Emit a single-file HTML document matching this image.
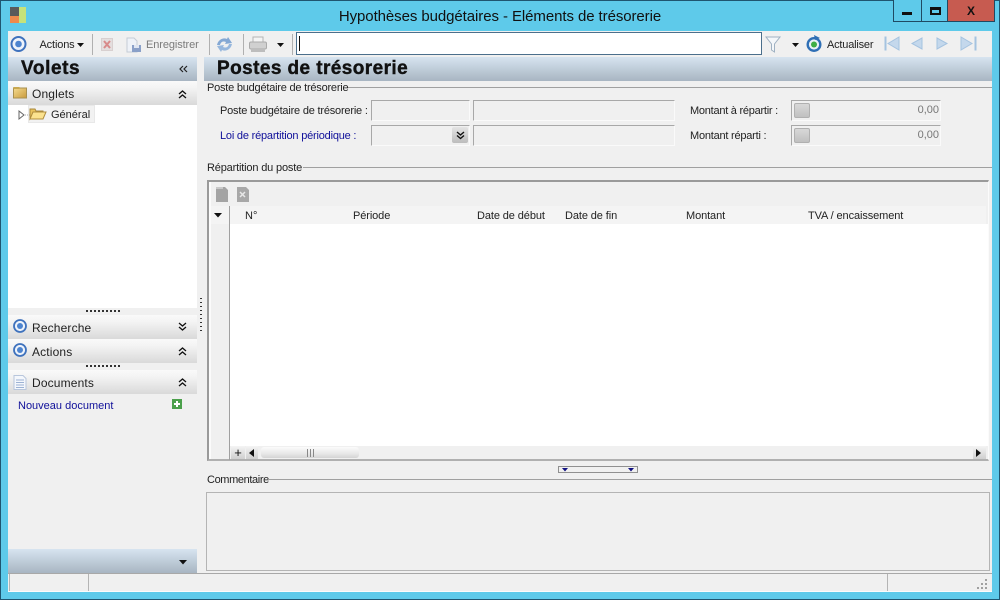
<!DOCTYPE html>
<html lang="fr"><head><meta charset="utf-8"><title>Hypothèses budgétaires</title>
<style>
html,body{margin:0;padding:0;width:1000px;height:600px;overflow:hidden;background:#5ecaea}
*{box-sizing:border-box}
body{position:relative;font-family:"Liberation Sans",sans-serif;font-size:11px;color:#222}
.a{position:absolute}
.t{position:absolute;white-space:nowrap;line-height:14px;height:14px}
.hdr{position:absolute;background:linear-gradient(#d7e4f0,#a8b5c2)}
.sec{position:absolute;left:8px;width:189px;height:24px;background:linear-gradient(#fafafa,#f3f3f3 30%,#d9d9d9)}
.sec .t{left:24px;top:6px;font-size:12px;color:#222;letter-spacing:.15px}
.fld{position:absolute;background:#f0f0f0;border-top:1px solid #a8a8a8;border-left:1px solid #a8a8a8;border-right:1px solid #fafafa;border-bottom:1px solid #fafafa;height:21px}
.ln{position:absolute;height:1px;background:#a0a0a0}
.sep{position:absolute;width:1px;top:34px;height:21px;background:#b0b0b0}
.b{font-weight:bold;color:#111}
.h{-webkit-text-stroke:.4px #111}
svg{position:absolute;overflow:visible}
</style></head><body>

<!-- window frame -->
<div class="a" style="left:0;top:0;width:1000px;height:600px;border:1px solid #1f5570;background:#5ecaea"></div>
<div class="a" style="left:8px;top:31px;width:984px;height:561px;background:#f0f0f0"></div>

<!-- title bar -->
<div class="a" style="left:10px;top:7px;width:9px;height:9px;background:#5a5a5a"></div>
<div class="a" style="left:10px;top:16px;width:9px;height:7px;background:#ee8a4c"></div>
<div class="a" style="left:19px;top:7px;width:7px;height:16px;background:#c6e27a"></div>
<div class="t" style="left:0;width:1000px;top:8px;height:17px;line-height:17px;text-align:center;font-size:15px;letter-spacing:-.08px;color:#111">Hypothèses budgétaires - Eléments de trésorerie</div>
<div class="a" style="left:893px;top:0;width:102px;height:22px;background:#5ecaea;border:1px solid #1f4a63;border-top:0"></div>
<div class="a" style="left:921px;top:0;width:1px;height:22px;background:#1f4a63"></div>
<div class="a" style="left:947px;top:0;width:1px;height:22px;background:#1f4a63"></div>
<div class="a" style="left:948px;top:0;width:46px;height:21px;background:#c75b50"></div>
<div class="a" style="left:902px;top:12px;width:10px;height:3px;background:#111"></div>
<div class="a" style="left:930px;top:7px;width:11px;height:8px;border:2px solid #111;border-top-width:3px"></div>
<div class="t b" style="left:948px;top:3px;width:46px;text-align:center;font-size:12px;line-height:16px">X</div>

<!-- toolbar -->
<svg style="left:10px;top:35px" width="18" height="18" viewBox="0 0 18 18"><circle cx="8.5" cy="9" r="7" fill="#eef3fb" stroke="#3f72bd" stroke-width="2"/><circle cx="8.5" cy="9" r="3.300" fill="#4d84cf"/></svg>
<div class="t" style="left:39.500px;top:38px;font-size:11px;letter-spacing:-.15px">Actions</div>
<svg style="left:77px;top:43px" width="8" height="4"><path d="M0 0h7L3.500 4z" fill="#111"/></svg>
<div class="sep" style="left:92px"></div>
<div class="a" style="left:101px;top:38px;width:12px;height:13px;background:#e4dede;border:1px solid #d8d0d0"></div>
<svg style="left:103px;top:40px" width="8" height="9"><path d="M1 1l6 7M7 1L1 8" stroke="#d88a8a" stroke-width="2"/></svg>
<svg style="left:126px;top:37px" width="16" height="16"><path d="M1 1h7l3 3v11H1z" fill="#eef2f8" stroke="#c5ccd6"/><rect x="6" y="8" width="9" height="7" fill="#8aa0c8"/><rect x="8" y="8" width="5" height="3" fill="#dfe6f2"/></svg>
<div class="t" style="left:146px;top:38px;color:#7b7b7b;font-size:11px;letter-spacing:-.1px">Enregistrer</div>
<div class="sep" style="left:209px"></div>
<svg style="left:216px;top:36px" width="17" height="17"><path d="M1 9C2 4 7 1 11 3l1-2 4 6-7 1 1-2C8 5 5 5 4 9z" fill="#84a8d4"/><path d="M16 8c-1 5-6 8-10 6l-1 2-4-6 7-1-1 2c2 1 5 1 6-3z" fill="#97b7dd"/></svg>
<div class="sep" style="left:243px"></div>
<svg style="left:249px;top:36px" width="19" height="17"><rect x="4" y="1" width="10" height="6" fill="#f4f4f4" stroke="#b4b4b4"/><rect x=".5" y="6" width="17" height="7" rx="1.500" fill="#d0d0d0" stroke="#aaa"/><rect x="2" y="13" width="14" height="3" fill="#bdbdbd"/></svg>
<svg style="left:277px;top:43px" width="8" height="4"><path d="M0 0h7L3.500 4z" fill="#111"/></svg>
<div class="sep" style="left:292px"></div>
<div class="a" style="left:296px;top:32px;width:466px;height:23px;background:#fff;border:1px solid #4b6f8c"></div>
<div class="a" style="left:299px;top:36px;width:1px;height:15px;background:#111"></div>
<svg style="left:765px;top:36px" width="16" height="17"><path d="M1 1h14L9.500 8v8L6.500 14V8z" fill="#f4f7fa" stroke="#9fb1c2"/></svg>
<svg style="left:792px;top:43px" width="8" height="4"><path d="M0 0h7L3.500 4z" fill="#111"/></svg>
<svg style="left:805px;top:35px" width="18" height="18"><circle cx="9" cy="9.500" r="6.300" fill="#eaf1f6" stroke="#2f6fb5" stroke-width="2.400"/><circle cx="9" cy="9.500" r="3" fill="#3fae44"/><path d="M9 0l6 3-5 2z" fill="#2f6fb5"/></svg>
<div class="t" style="left:827px;top:38px;font-size:11px;letter-spacing:-.2px">Actualiser</div>
<svg style="left:883px;top:36px" width="94" height="16">
<g fill="#c4d8ec" stroke="#a5c3e0"><path d="M2 1h1v13H2z"/><path d="M16 1v13L5 7.500z"/><path d="M39 2v11l-10-5.500z"/><path d="M54 2v11l10-5.500z"/><path d="M78 1v13l11-6.500z"/><path d="M92 1h1v13h-1z"/></g></svg>

<!-- headers -->
<div class="hdr" style="left:8px;top:57px;width:189px;height:24px"></div>
<div class="t b h" style="left:21px;top:59px;height:20px;line-height:20px;font-size:19px;letter-spacing:.6px">Volets</div>
<svg style="left:179px;top:65px" width="9" height="8"><path d="M4 1L1 4l3 3M8 1L5 4l3 3" fill="none" stroke="#222" stroke-width="1.200"/></svg>
<div class="hdr" style="left:204px;top:57px;width:788px;height:24px"></div>
<div class="t b h" style="left:217px;top:59px;height:20px;line-height:20px;font-size:19px;letter-spacing:.42px">Postes de trésorerie</div>

<!-- left pane -->
<div class="sec" style="top:81px"><div class="t">Onglets</div></div>
<svg style="left:13px;top:86px" width="15" height="13"><defs><linearGradient id="fg" x1="0" y1="0" x2="1" y2="1"><stop offset="0" stop-color="#f5dc90"/><stop offset="1" stop-color="#c99a3c"/></linearGradient></defs><rect x=".5" y="2" width="13" height="10" fill="url(#fg)" stroke="#a89050"/><rect x=".5" y="1" width="6" height="2" fill="#c8a850"/></svg>
<svg style="left:178px;top:90px" width="9" height="9"><path d="M1 4l3.500-3L8 4M1 8l3.500-3L8 8" fill="none" stroke="#111" stroke-width="1.300"/></svg>
<div class="a" style="left:8px;top:105px;width:189px;height:203px;background:#fff"></div>
<div class="a" style="left:28px;top:105px;width:67px;height:18px;background:#f2f2f2;border:1px solid #e8e8e8"></div>
<svg style="left:18px;top:110px" width="12" height="10"><path d="M1 1l5 4-5 4z" fill="#fff" stroke="#666"/><path d="M7 5h5" stroke="#aaa" stroke-dasharray="1 1"/></svg>
<svg style="left:29px;top:107px" width="18" height="14"><path d="M1 12V2h5l1 2h7v2H5z" fill="#e9c25c" stroke="#a8883c"/><path d="M1 12l3-7h13l-3 7z" fill="#fbe28e" stroke="#b08d3d"/></svg>
<div class="t" style="left:51px;top:108px;font-size:11px">Général</div>
<div class="a" style="left:8px;top:308px;width:189px;height:7px;background:#f0f0f0"></div>
<div class="a" style="left:86px;top:310px;width:34px;height:2px;background:repeating-linear-gradient(90deg,#333 0 2px,transparent 2px 4px)"></div>

<div class="sec" style="top:315px"><div class="t">Recherche</div></div>
<svg style="left:12px;top:318px" width="16" height="16"><circle cx="8" cy="8" r="6" fill="#eef3fb" stroke="#3f72bd" stroke-width="1.800"/><circle cx="8" cy="8" r="3" fill="#4d84cf"/></svg>
<svg style="left:178px;top:322px" width="9" height="9"><path d="M1 1l3.500 3L8 1M1 5l3.500 3L8 5" fill="none" stroke="#111" stroke-width="1.300"/></svg>
<div class="sec" style="top:339px"><div class="t">Actions</div></div>
<svg style="left:12px;top:342px" width="16" height="16"><circle cx="8" cy="8" r="6" fill="#eef3fb" stroke="#3f72bd" stroke-width="1.800"/><circle cx="8" cy="8" r="3" fill="#4d84cf"/></svg>
<svg style="left:178px;top:347px" width="9" height="9"><path d="M1 4l3.500-3L8 4M1 8l3.500-3L8 8" fill="none" stroke="#111" stroke-width="1.300"/></svg>
<div class="a" style="left:86px;top:365px;width:34px;height:2px;background:repeating-linear-gradient(90deg,#333 0 2px,transparent 2px 4px)"></div>
<div class="sec" style="top:370px"><div class="t">Documents</div></div>
<svg style="left:13px;top:375px" width="14" height="15"><path d="M1 .5h9l3 3v11H1z" fill="#f4f7fc" stroke="#b8c6dc"/><path d="M3 5h8M3 7.500h8M3 10h8M3 12.500h8" stroke="#9cb2d4"/></svg>
<svg style="left:178px;top:378px" width="9" height="9"><path d="M1 4l3.500-3L8 4M1 8l3.500-3L8 8" fill="none" stroke="#111" stroke-width="1.300"/></svg>
<div class="t" style="left:18px;top:399px;color:#10109a;font-size:11px">Nouveau document</div>
<div class="a" style="left:172px;top:399px;width:10px;height:10px;background:#4ba04b"></div>
<div class="a" style="left:174px;top:403px;width:6px;height:2px;background:#fff"></div>
<div class="a" style="left:176px;top:401px;width:2px;height:6px;background:#fff"></div>
<div class="hdr" style="left:8px;top:549px;width:189px;height:24px"></div>
<svg style="left:179px;top:560px" width="9" height="5"><path d="M0 0h8L4 4.500z" fill="#111"/></svg>
<div class="a" style="left:200px;top:298px;width:2px;height:34px;background:repeating-linear-gradient(#333 0 1px,transparent 1px 4px)"></div>

<!-- Group 1 -->
<div class="t" style="left:207px;top:81px;font-size:11px;letter-spacing:-.22px">Poste budgétaire de trésorerie</div>
<div class="ln" style="left:348px;top:87px;width:644px"></div>
<div class="t" style="left:220px;top:104px;letter-spacing:-.2px">Poste budgétaire de trésorerie :</div>
<div class="fld" style="left:371px;top:100px;width:99px"></div>
<div class="fld" style="left:473px;top:100px;width:202px"></div>
<div class="t" style="left:220px;top:129px;color:#10109a;letter-spacing:-.2px">Loi de répartition périodique :</div>
<div class="fld" style="left:371px;top:125px;width:99px"></div>
<div class="a" style="left:452px;top:127px;width:16px;height:16px;background:linear-gradient(#e4e4e4,#bcbcbc);border-radius:2px"></div>
<svg style="left:456px;top:131px" width="9" height="9"><path d="M1 1l3.500 3L8 1M1 4.500l3.500 3 3.500-3" fill="none" stroke="#111" stroke-width="1.400"/></svg>
<div class="fld" style="left:473px;top:125px;width:202px"></div>
<div class="t" style="left:690px;top:104px;letter-spacing:-.25px">Montant à répartir :</div>
<div class="fld" style="left:791px;top:100px;width:150px"></div>
<div class="a" style="left:794px;top:103px;width:16px;height:15px;background:linear-gradient(#d8d8d8,#c0c0c0);border:1px solid #b0b0b0;border-radius:2px"></div>
<div class="t" style="left:880px;width:59px;text-align:right;top:103px;color:#777">0,00</div>
<div class="t" style="left:690px;top:129px;letter-spacing:-.22px">Montant réparti :</div>
<div class="fld" style="left:791px;top:125px;width:150px"></div>
<div class="a" style="left:794px;top:128px;width:16px;height:15px;background:linear-gradient(#d8d8d8,#c0c0c0);border:1px solid #b0b0b0;border-radius:2px"></div>
<div class="t" style="left:880px;width:59px;text-align:right;top:128px;color:#777">0,00</div>

<!-- Group 2 -->
<div class="t" style="left:207px;top:161px;letter-spacing:-.17px">Répartition du poste</div>
<div class="ln" style="left:303px;top:167px;width:689px"></div>
<div class="a" style="left:207px;top:180px;width:782px;height:281px;background:#f0f0f0;border:2px solid #9a9a9a;border-right:1px solid #fbfbfb;border-bottom:2px solid #b0b0b0"></div>
<div class="a" style="left:209px;top:182px;width:2px;height:277px;background:#fbfbfb"></div>
<svg style="left:216px;top:187px" width="12" height="15"><path d="M0 0h9l3 3v12H0z" fill="#a4a4a4"/><path d="M0 0h7v2H0z" fill="#c8c8c8"/></svg>
<svg style="left:237px;top:187px" width="12" height="15"><path d="M0 0h9l3 3v12H0z" fill="#a8a8a8"/><path d="M3 5l5 5M8 5l-5 5" stroke="#e8e8e8" stroke-width="1.500"/></svg>
<div class="a" style="left:211px;top:206px;width:775px;height:18px;background:#f4f4f4"></div>
<div class="a" style="left:229px;top:206px;width:1px;height:254px;background:#a0a0a0"></div>
<div class="a" style="left:230px;top:224px;width:758px;height:222px;background:#fff"></div>
<svg style="left:214px;top:213px" width="9" height="5"><path d="M0 0h8L4 4.500z" fill="#111"/></svg>
<div class="t" style="left:245px;top:209px">N°</div>
<div class="t" style="left:353px;top:209px;letter-spacing:-.1px">Période</div>
<div class="t" style="left:477px;top:209px;letter-spacing:-.1px">Date de début</div>
<div class="t" style="left:565px;top:209px;letter-spacing:-.1px">Date de fin</div>
<div class="t" style="left:686px;top:209px;letter-spacing:-.1px">Montant</div>
<div class="t" style="left:808px;top:209px;letter-spacing:-.1px">TVA / encaissement</div>
<!-- scrollbar -->
<div class="a" style="left:230px;top:446px;width:756px;height:13px;background:#f0f0f0"></div>
<div class="a" style="left:231px;top:446px;width:14px;height:13px;background:linear-gradient(#f4f4f4,#cfcfcf)"></div>
<div class="t" style="left:231px;top:446px;width:14px;text-align:center;font-size:13px;line-height:14px;color:#111">+</div>
<div class="a" style="left:246px;top:446px;width:12px;height:13px;background:linear-gradient(#f4f4f4,#cfcfcf)"></div>
<svg style="left:249px;top:449px" width="6" height="8"><path d="M5 0v8L0 4z" fill="#111"/></svg>
<div class="a" style="left:261px;top:447px;width:98px;height:11px;border-radius:3px;background:linear-gradient(#fbfbfb,#e8e8e8 60%,#d4d4d4)"></div>
<div class="a" style="left:307px;top:449px;width:7px;height:8px;background:repeating-linear-gradient(90deg,#888 0 1px,transparent 1px 3px)"></div>
<div class="a" style="left:973px;top:446px;width:13px;height:13px;background:linear-gradient(#f4f4f4,#cfcfcf)"></div>
<svg style="left:976px;top:449px" width="6" height="8"><path d="M0 0v8l5-4z" fill="#111"/></svg>
<!-- splitter -->
<div class="a" style="left:558px;top:466px;width:80px;height:7px;border:1px solid #909090;background:#f0f0f0"></div>
<svg style="left:562px;top:468px" width="72" height="4"><path d="M0 0h6L3 3.500zM66 0h6l-3 3.500z" fill="#101080"/></svg>

<!-- Group 3 -->
<div class="t" style="left:207px;top:473px;letter-spacing:-.38px">Commentaire</div>
<div class="ln" style="left:268px;top:479px;width:724px"></div>
<div class="a" style="left:206px;top:492px;width:784px;height:79px;border:1px solid #b4b4b4;background:#f0f0f0"></div>

<!-- status bar -->
<div class="a" style="left:8px;top:573px;width:984px;height:1px;background:#a8a8a8"></div>
<div class="a" style="left:9px;top:574px;width:1px;height:17px;background:#b4b4b4"></div>
<div class="a" style="left:88px;top:574px;width:1px;height:17px;background:#b4b4b4"></div>
<div class="a" style="left:887px;top:574px;width:1px;height:17px;background:#b4b4b4"></div>
<div class="a" style="left:8px;top:591px;width:984px;height:1px;background:#fbfbfb"></div>
<svg style="left:977px;top:579px" width="12" height="12"><path d="M8 0h2v2H8zM4 4h2v2H4zM8 4h2v2H8zM0 8h2v2H0zM4 8h2v2H4zM8 8h2v2H8z" fill="#a0a0a0"/></svg>
</body></html>
